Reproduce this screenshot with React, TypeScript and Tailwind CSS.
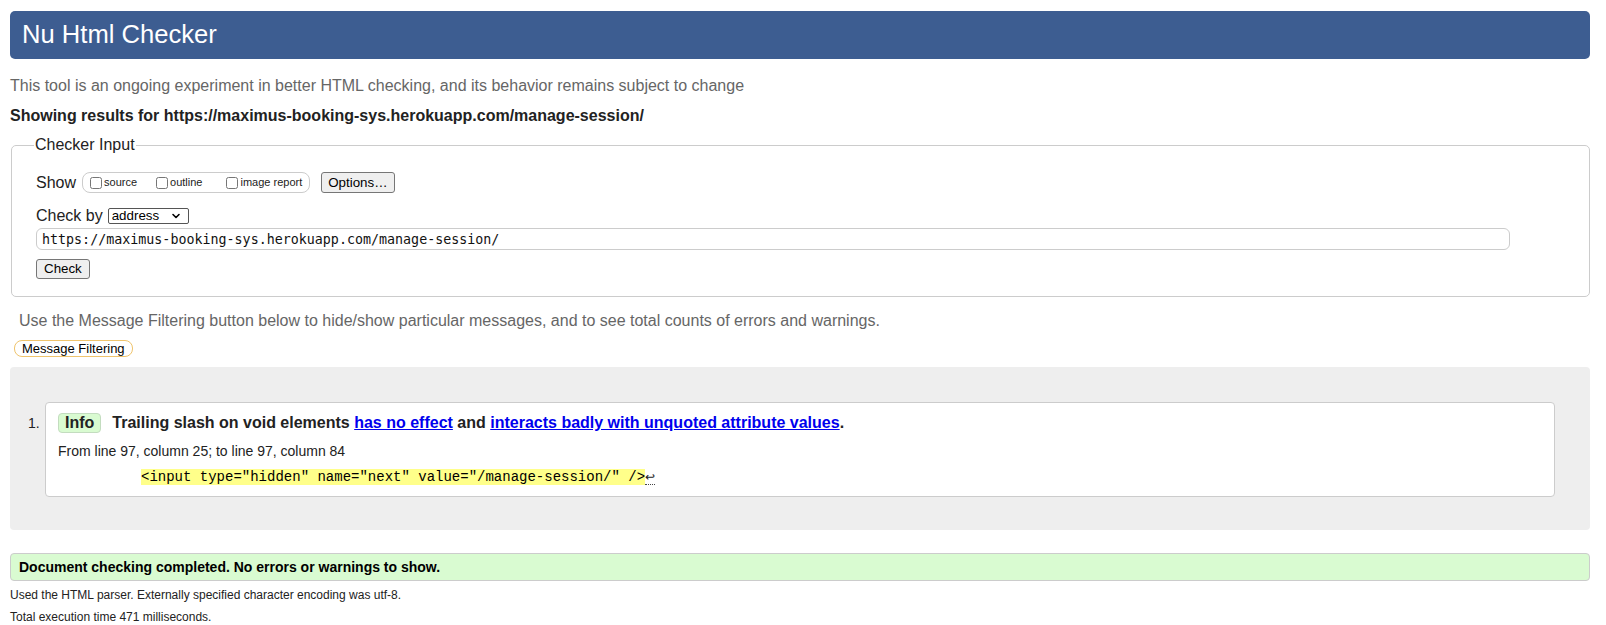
import { ChevronDown } from "lucide-react";

const checkedUrl = "https://maximus-booking-sys.herokuapp.com/manage-session/";

function Checkbox({ label, className }: { label: string; className?: string }) {
  return (
    <label className={`flex items-center ${className ?? ""}`}>
      <input type="checkbox" className="mr-[2px] h-[12px] w-[12px]" />
      <span className="text-[11px] leading-none">{label}</span>
    </label>
  );
}

function FormButton({ children, className }: { children: React.ReactNode; className?: string }) {
  return (
    <button
      type="button"
      className={`rounded-[3px] border border-[#767676] bg-[#efefef] text-[13.33px] leading-none text-black ${className ?? ""}`}
    >
      {children}
    </button>
  );
}

export default function App() {
  return (
    <div className="min-h-screen bg-white pl-[10px] pr-[16px] pt-[11px] font-['Liberation_Sans',Arial,Helvetica,sans-serif] text-[16px] text-[#222]">
      <h1 className="flex h-[48px] items-center rounded-[5px] bg-[#3d5d91] pl-[12px] text-[25.6px] leading-none text-white">
        Nu Html Checker
      </h1>

      <p className="mt-[18px] leading-[18px] text-[#666]">
        This tool is an ongoing experiment in better HTML checking, and its behavior remains subject to change
      </p>
      <p className="mt-[12px] font-bold leading-[18px]">Showing results for {checkedUrl}</p>

      <fieldset className="ml-[1px] mt-[11px] rounded-[5px] border border-[#ccc] pb-[17px] pl-[24px] pr-[79px] pt-[18px]">
        <legend className="-ml-[2px] px-[1px] leading-[18px]">Checker Input</legend>

        <div className="flex h-[21px] items-center">
          <span className="leading-[18px]">Show</span>
          <div className="ml-[6px] flex h-[21px] items-center rounded-[8px] border border-[#ccc] pl-[7px] pr-[7px]">
            <Checkbox label="source" />
            <Checkbox label="outline" className="ml-[19px]" />
            <Checkbox label="image report" className="ml-[24px]" />
          </div>
          <FormButton className="ml-[11px] h-[21px] px-[6px]">Options…</FormButton>
        </div>

        <div className="mt-[14px] flex h-[18px] items-center">
          <span className="leading-[18px]">Check by</span>
          <div className="ml-[5px] flex h-[16px] w-[81px] items-center justify-between rounded-[2px] border border-[#555] bg-white pl-[3px] pr-[6px] text-[13.33px] leading-none text-black">
            <span>address</span>
            <ChevronDown size={12} strokeWidth={3.2} className="text-black" />
          </div>
        </div>

        <input
          readOnly
          value={checkedUrl}
          className="mt-[3px] block h-[22px] w-full rounded-[6px] border border-[#ccc] bg-white pl-[5px] font-['DejaVu_Sans_Mono',monospace] text-[13.33px] text-[#111]"
        />

        <FormButton className="mt-[9px] block h-[20px] px-[7px]">Check</FormButton>
      </fieldset>

      <p className="ml-[9px] mt-[15px] leading-[18px] text-[#666]">
        Use the Message Filtering button below to hide/show particular messages, and to see total counts of errors and warnings.
      </p>
      <button
        type="button"
        className="ml-[4px] mt-[10px] block h-[17px] rounded-[8px] border border-[#efc46d] bg-white px-[7px] text-[13px] leading-none text-black"
      >
        Message Filtering
      </button>

      <div className="mt-[10px] flex rounded-[4px] bg-[#eee] pb-[33px] pl-[18px] pr-[35px] pt-[35px]">
        <span className="w-[17px] shrink-0 pt-[13px] text-[14px] leading-[16px]">1.</span>
        <div className="flex-1 rounded-[4px] border border-[#ccc] bg-white pb-[10px] pl-[12px] pt-[10px]">
          <div className="flex items-center">
            <span className="flex h-[20px] items-center rounded-[4px] border border-[#c3dcbf] bg-[#d9fbd1] px-[6px] font-bold leading-none">
              Info
            </span>
            <span className="ml-[11px] font-bold leading-[18px]">
              Trailing slash on void elements{" "}
              <a href="#" className="text-[#0000ee] underline">
                has no effect
              </a>{" "}
              and{" "}
              <a href="#" className="text-[#0000ee] underline">
                interacts badly with unquoted attribute values
              </a>
              .
            </span>
          </div>
          <p className="mt-[10px] text-[14px] leading-[16px]">From line 97, column 25; to line 97, column 84</p>
          <p className="mt-[8px] pl-[83px] leading-[18px]">
            <code className="bg-[#ffff8a] font-['Liberation_Mono','Courier_New',monospace] text-[14px] text-black">
              {'<input type="hidden" name="next" value="/manage-session/" />'}
            </code>
            <span className="border-b border-dotted border-[#444] text-[12px] leading-none">↩</span>
          </p>
        </div>
      </div>

      <div className="mt-[23px] flex h-[28px] items-center rounded-[4px] border border-[#ccc] bg-[#d9fbd1] pl-[8px] text-[14px] font-bold text-black">
        Document checking completed. No errors or warnings to show.
      </div>

      <p className="mt-[7px] text-[12px] leading-[14px]">
        Used the HTML parser. Externally specified character encoding was utf-8.
      </p>
      <p className="mt-[8px] text-[12px] leading-[14px]">Total execution time 471 milliseconds.</p>
    </div>
  );
}
